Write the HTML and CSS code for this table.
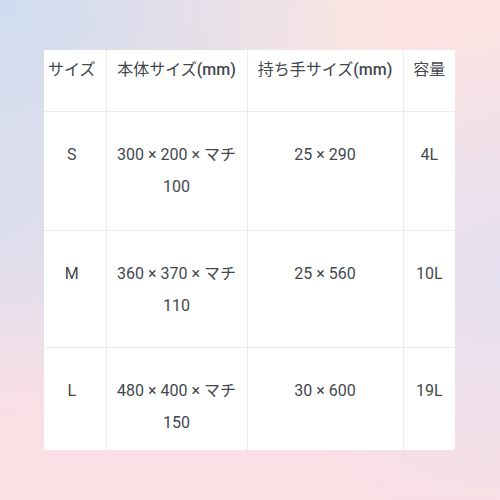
FILE: index.html
```html
<!DOCTYPE html>
<html lang="ja">
<head>
<meta charset="utf-8">
<link rel="stylesheet" href="styles.css">
</head>
<body>
<div class="frame">
  <table class="sizes">
    <colgroup>
      <col class="c1"><col class="c2"><col class="c3"><col class="c4">
    </colgroup>
    <thead>
      <tr class="head">
        <th class="first">サイズ</th>
        <th>本体サイズ<span class="unit">(mm)</span></th>
        <th>持ち手サイズ<span class="unit">(mm)</span></th>
        <th>容量</th>
      </tr>
    </thead>
    <tbody>
      <tr class="r1">
        <td class="first">S</td>
        <td>300 × 200 × マチ 100</td>
        <td>25 × 290</td>
        <td>4L</td>
      </tr>
      <tr class="r2">
        <td class="first">M</td>
        <td>360 × 370 × マチ 110</td>
        <td>25 × 560</td>
        <td>10L</td>
      </tr>
      <tr class="r3">
        <td class="first">L</td>
        <td>480 × 400 × マチ 150</td>
        <td>30 × 600</td>
        <td>19L</td>
      </tr>
    </tbody>
  </table>
</div>
</body>
</html>
```
FILE: styles.css
```css
html, body {
  margin: 0;
  height: 100%;
}
body {
  background:
    radial-gradient(circle at 0% 0%, rgba(206, 220, 240, 1) 0%, rgba(206, 220, 240, 0) 55%),
    radial-gradient(circle at 100% 55%, rgba(228, 224, 239, 1) 0%, rgba(228, 224, 239, 0) 45%),
    radial-gradient(circle at 0% 45%, rgba(228, 224, 236, 0.9) 0%, rgba(228, 224, 236, 0) 35%),
    radial-gradient(circle at 70% 0%, rgba(253, 230, 224, 1) 0%, rgba(253, 230, 224, 0) 50%),
    #fadfe4;
  padding: 50px 45px 0 44px;
  box-sizing: border-box;
  font-family: Roboto, "Noto Sans CJK JP", sans-serif;
  color: #43484d;
}
.frame {
  width: 411px;
  height: 400px;
  overflow: hidden;
  background: #fff;
}
.sizes {
  width: 411px;
  border-collapse: collapse;
  table-layout: fixed;
  font-size: 16px;
  line-height: 32px;
  text-align: center;
}
.c1 { width: 62px; }
.c2 { width: 141px; }
.c3 { width: 156px; }
.c4 { width: 52px; }
.sizes th, .sizes td {
  padding: 0 8px;
  border-right: 1px solid #ececec;
  border-bottom: 1px solid #ececec;
  vertical-align: top;
}
.sizes th:last-child, .sizes td:last-child {
  border-right: none;
}
.sizes th {
  font-weight: 400;
  padding-top: 4px;
  white-space: nowrap;
}
.unit {
  font-weight: 500;
}
.sizes td {
  font-weight: 400;
  padding-top: 27px;
}
.sizes .first {
  padding-left: 2px;
  padding-right: 8px;
}
.head { height: 61px; }
.r1 { height: 119px; }
.r2 { height: 117px; }
.r3 { height: 119px; }
```
